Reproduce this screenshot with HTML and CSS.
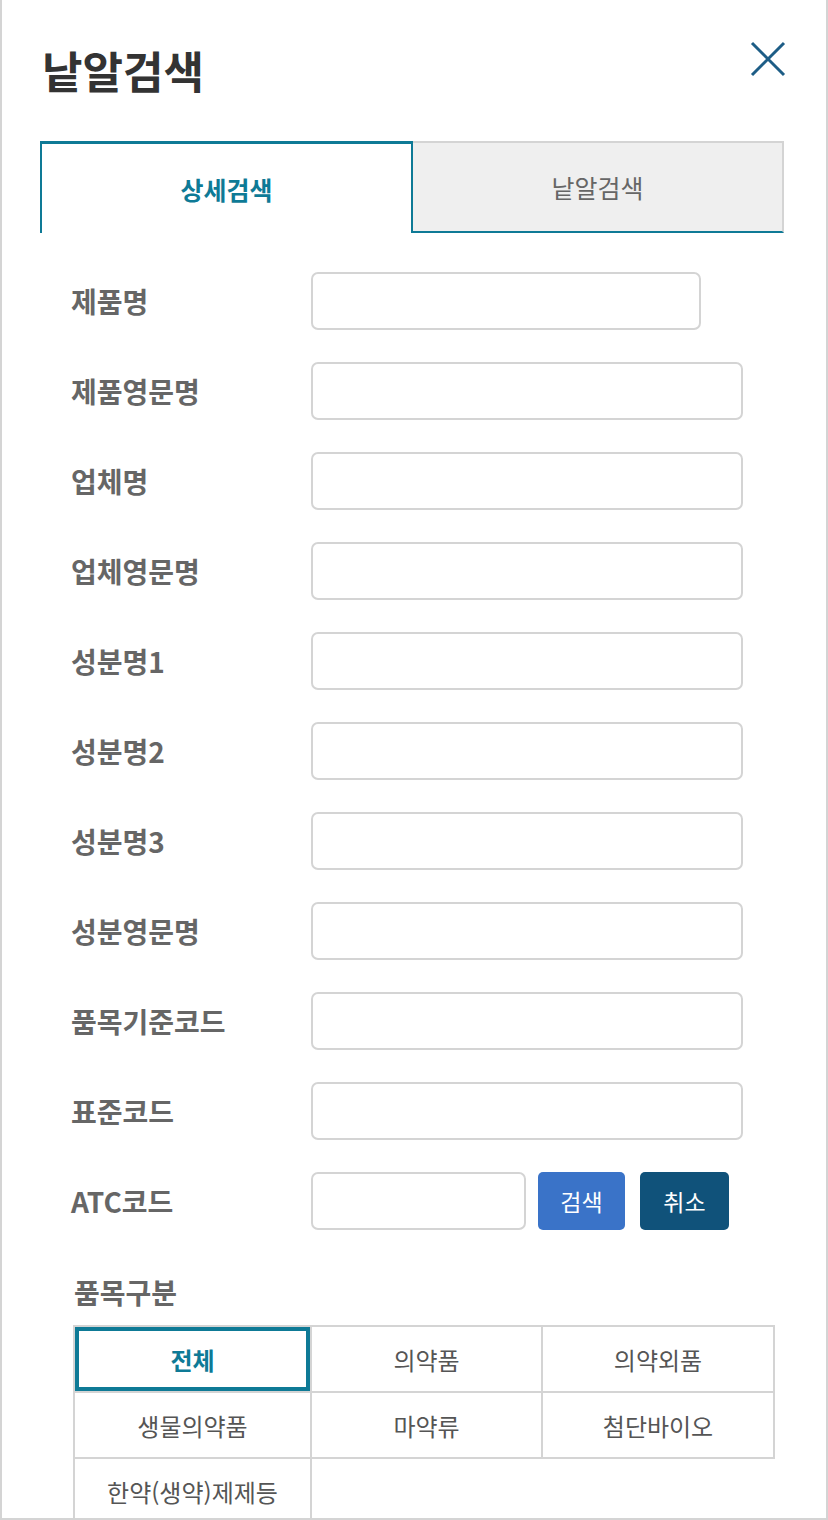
FILE: index.html
```html
<!DOCTYPE html>
<html lang="ko">
<head>
  <meta charset="UTF-8" />
  <meta name="viewport" content="width=device-width, initial-scale=1" />
  <title>낱알검색</title>
  <link rel="stylesheet" href="styles.css">
</head>
<body>

<div class="modal">
  <div class="modal-head">
    <h1>낱알검색</h1>
    <button class="close" type="button" aria-label="닫기">
      <svg width="36" height="36" viewBox="0 0 36 36">
        <path d="M2 2 L34 34 M34 2 L2 34" stroke="#1d5d86" stroke-width="3" fill="none" />
      </svg>
    </button>
  </div>

  <div class="tabs">
    <div class="tab active">상세검색</div>
    <div class="tab">낱알검색</div>
  </div>

  <form class="search-form">
    <div class="row">
      <label>제품명</label>
      <input type="text" class="short">
    </div>
    <div class="row">
      <label>제품영문명</label>
      <input type="text">
    </div>
    <div class="row">
      <label>업체명</label>
      <input type="text">
    </div>
    <div class="row">
      <label>업체영문명</label>
      <input type="text">
    </div>
    <div class="row">
      <label>성분명1</label>
      <input type="text">
    </div>
    <div class="row">
      <label>성분명2</label>
      <input type="text">
    </div>
    <div class="row">
      <label>성분명3</label>
      <input type="text">
    </div>
    <div class="row">
      <label>성분영문명</label>
      <input type="text">
    </div>
    <div class="row">
      <label>품목기준코드</label>
      <input type="text">
    </div>
    <div class="row">
      <label>표준코드</label>
      <input type="text">
    </div>
    <div class="row">
      <label>ATC코드</label>
      <input type="text" class="atc">
      <button type="button" class="btn btn-search">검색</button>
      <button type="button" class="btn btn-cancel">취소</button>
    </div>
  </form>

  <div class="kind">
    <h3>품목구분</h3>
    <div class="kind-grid">
      <div class="cell active">전체</div>
      <div class="cell">의약품</div>
      <div class="cell">의약외품</div>
      <div class="cell">생물의약품</div>
      <div class="cell">마약류</div>
      <div class="cell">첨단바이오</div>
      <div class="cell">한약(생약)제제등</div>
    </div>
  </div>
</div>

</body>
</html>
```

FILE: styles.css
```css
body {
  margin: 0;
  font-family: "Noto Sans CJK KR", "Noto Sans", sans-serif;
  background: #fff;
}

.modal {
  box-sizing: border-box;
  height: 1520px;
  overflow: hidden;
  border: 2px solid #d4d4d4;
  border-top: none;
  padding: 0 42px 0 38px;
}

.modal-head {
  display: flex;
  justify-content: space-between;
  align-items: flex-start;
  padding-top: 40px;
  height: 141px;
  box-sizing: border-box;
}

.modal-head h1 {
  margin: 0 0 0 2px;
  font-size: 44px;
  line-height: 60px;
  font-weight: 700;
  color: #333;
}

.close {
  background: none;
  border: none;
  padding: 0;
  margin: 1px -2px 0 0;
  width: 36px;
  height: 36px;
  cursor: pointer;
}

.tabs {
  display: flex;
  height: 92px;
}

.tab {
  flex: 1;
  display: flex;
  align-items: center;
  justify-content: center;
  font-size: 25px;
  color: #666;
  background: #efefef;
  border: 2px solid #d4d4d4;
  border-left: none;
  border-bottom: 2px solid #0e7a96;
  box-sizing: border-box;
}

.tab.active {
  background: #fff;
  color: #0e7a96;
  font-weight: 700;
  border: 2px solid #0e7a96;
  border-top: 3px solid #0e7a96;
  border-bottom: none;
}

.search-form {
  padding: 39px 0 0 31px;
  display: flex;
  flex-direction: column;
  gap: 32px;
}

.row {
  display: flex;
  align-items: center;
  height: 58px;
}

.row label {
  width: 240px;
  font-size: 28px;
  font-weight: 700;
  color: #666;
}

.row input {
  box-sizing: border-box;
  width: 432px;
  height: 58px;
  border: 2px solid #d4d4d4;
  border-radius: 7px;
  background: #fff;
  margin: 0;
}

.row input.short {
  width: 390px;
}

.row input.atc {
  width: 215px;
}

.btn {
  height: 58px;
  border: none;
  border-radius: 5px;
  color: #fff;
  font-family: inherit;
  font-size: 23px;
  cursor: pointer;
}

.btn-search {
  width: 87px;
  margin-left: 12px;
  background: #3a73c8;
}

.btn-cancel {
  width: 89px;
  margin-left: 15px;
  background: #10527a;
}

.kind {
  padding: 44px 0 0 34px;
}

.kind h3 {
  margin: 0 0 15px 0;
  font-size: 28px;
  line-height: 36px;
  font-weight: 700;
  color: #666;
}

.kind-grid {
  display: grid;
  grid-template-columns: 239px 231px 232px;
  margin-left: -1px;
}

.cell {
  height: 66px;
  display: flex;
  align-items: center;
  justify-content: center;
  font-size: 24px;
  color: #555;
  border-right: 2px solid #d4d4d4;
  border-bottom: 2px solid #d4d4d4;
  box-sizing: border-box;
}

.cell:nth-child(3n+1) {
  border-left: 2px solid #d4d4d4;
}

.cell:nth-child(-n+3) {
  height: 68px;
  border-top: 2px solid #d4d4d4;
}

.cell.active {
  color: #0e7a96;
  font-weight: 700;
  box-shadow: inset 0 0 0 4px #0e7a96;
}
```
